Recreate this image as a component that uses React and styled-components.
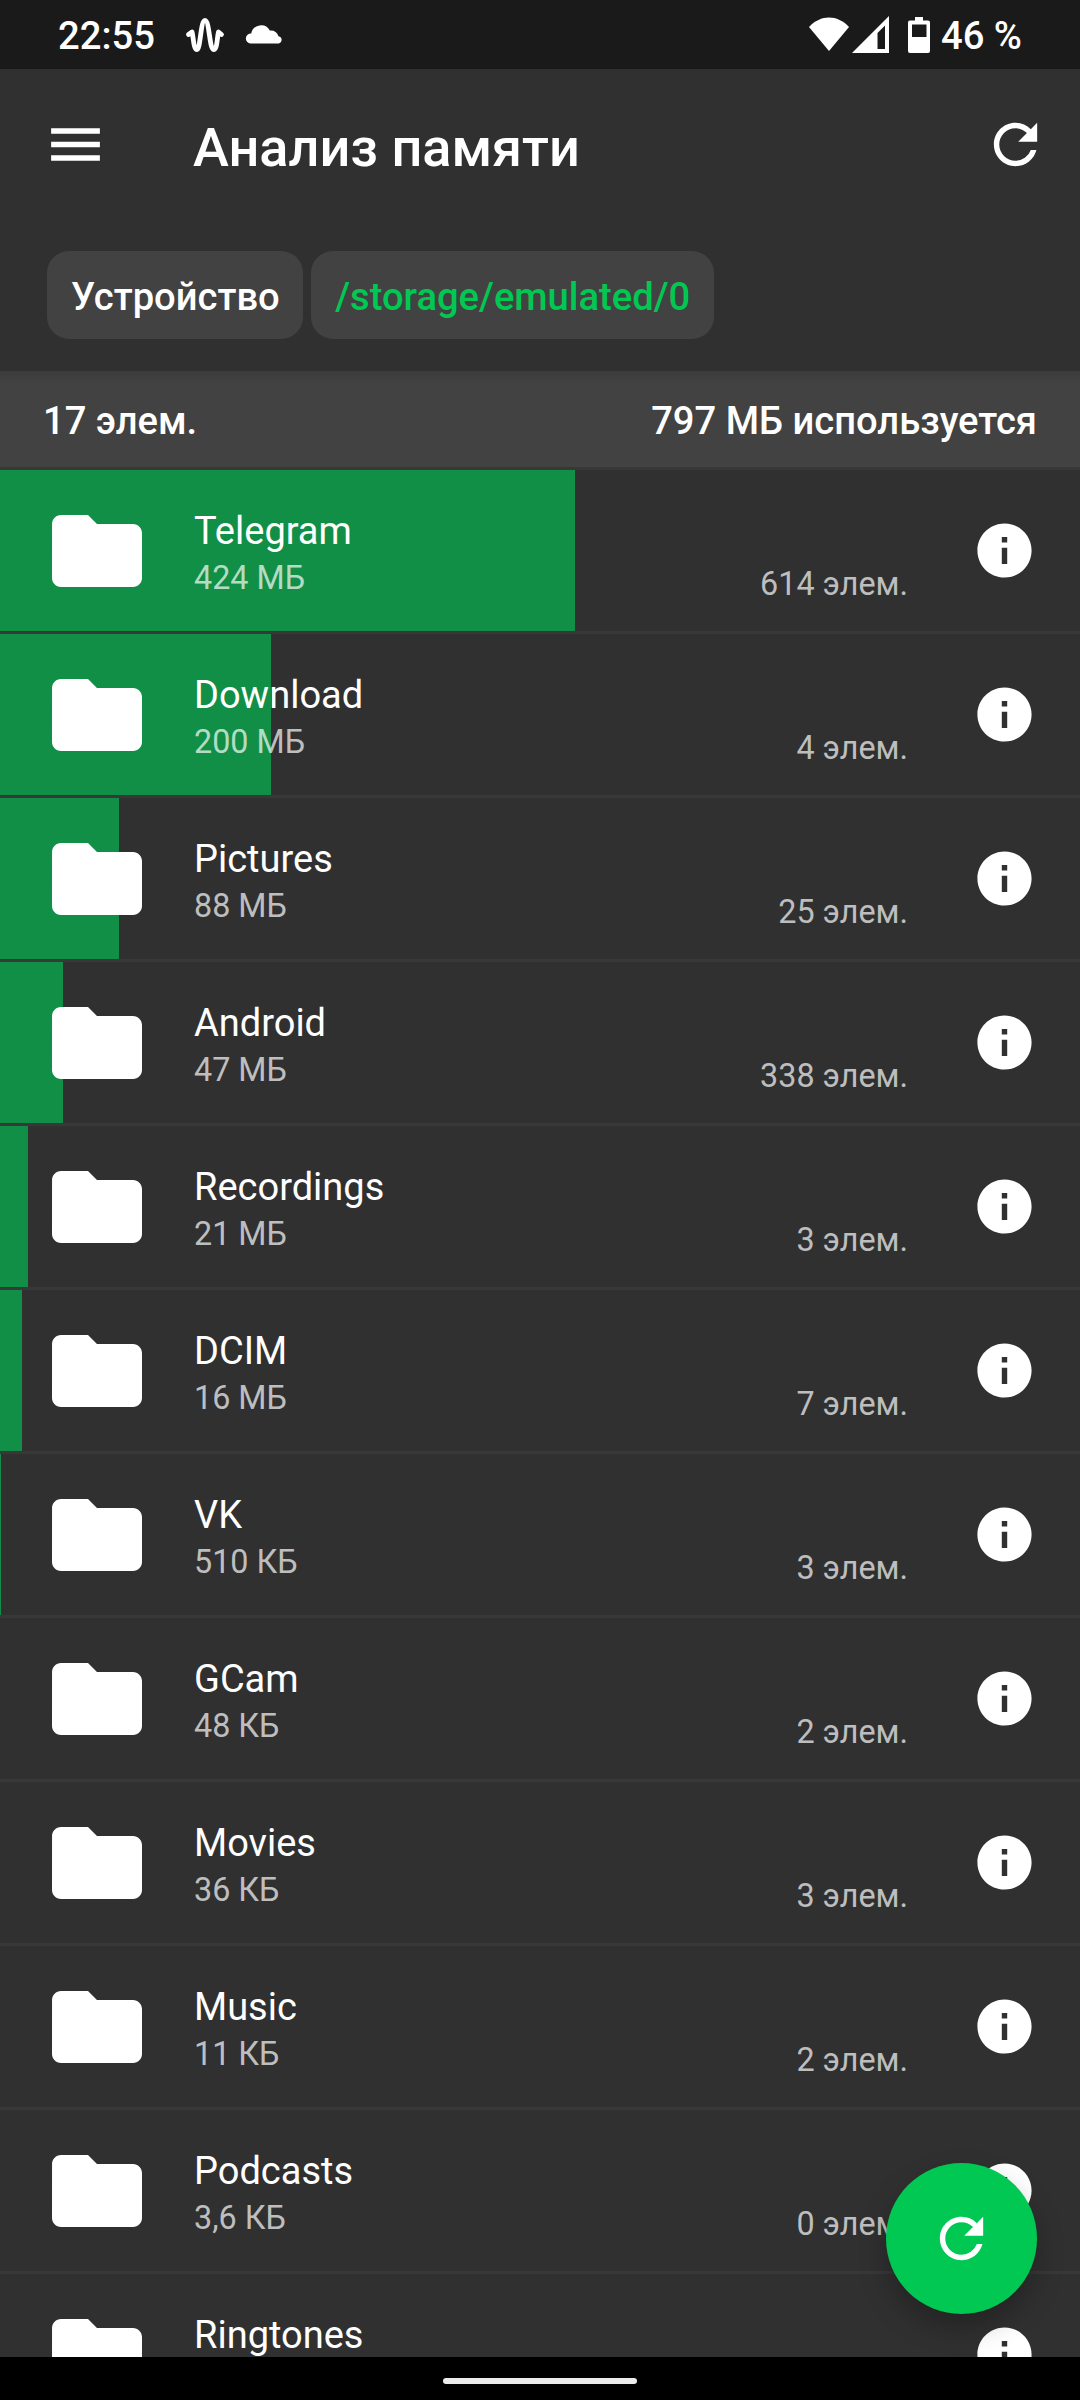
import React, { memo } from 'react';
import styled, { createGlobalStyle } from 'styled-components';

const GlobalStyle = createGlobalStyle`
    * {
        box-sizing: border-box;
    }

    body {
        margin: 0;
        background-color: #303030;
        font-family: Roboto, 'Noto Sans', sans-serif;
        color: white;
    }
`;

const Screen = styled.div`
    position: relative;
    display: flex;
    flex-direction: column;
    width: 1080px;
    height: 2400px;
    overflow: hidden;
    background-color: #303030;
`;

// Status bar //
const StatusBar = styled.div`
    display: flex;
    flex: none;
    justify-content: space-between;
    height: 69px;
    padding: 0 58px;
    background-color: #1a1a1a;
`;

const StatusGroup = styled.div`
    display: flex;
    align-items: center;
    height: 69px;
`;

const StatusText = styled.span`
    padding-top: 2px;
    font-size: 38.2px;
    font-weight: 500;
    line-height: 70px;
    white-space: pre;
`;

const StatusIcon = styled.svg`
    display: block;
    flex: none;
    margin-left: ${({ $gap }) => $gap || 0}px;
`;

const BatteryIcon = styled(StatusIcon)`
    margin-right: 1px;
`;

// Header //
const Header = styled.header`
    flex: none;
    height: 302px;
`;

const Toolbar = styled.div`
    display: flex;
    align-items: center;
    height: 151px;
    padding: 0 32px 0 43px;
`;

const Title = styled.h1`
    flex: 1;
    margin: 6px 0 0 85px;
    font-size: 54.1px;
    font-weight: 500;
    line-height: 64px;
`;

const Icon = styled.svg`
    display: block;
    flex: none;
    width: ${({ $size }) => $size || 65}px;
    height: ${({ $size }) => $size || 65}px;
    fill: white;
`;

const Breadcrumbs = styled.nav`
    display: flex;
    gap: 8px;
    padding: 31px 47px 0;
`;

const Crumb = styled.span`
    height: 88px;
    padding: 0 23.5px 0 24px;
    border-radius: 22px;
    background-color: #424242;
    color: ${({ $active }) => ($active ? '#00c853' : 'white')};
    font-size: 38.15px;
    font-weight: 500;
    line-height: 92px;
`;

const Summary = styled.div`
    display: flex;
    flex: none;
    justify-content: space-between;
    height: 96px;
    padding: 0 43px;
    background: linear-gradient(#3c3c3c, #424242 12px);
    font-size: 38.15px;
    font-weight: 500;
    line-height: 100px;
`;

// List //
const List = styled.div`
    flex: 1;
    min-height: 0;
    overflow: hidden;
`;

const Row = styled.div`
    position: relative;
    display: flex;
    height: 164px;
    padding: 0 43px;
    border-top: 3px solid #383838;
    align-items: center;
`;

const UsageBar = styled.div`
    position: absolute;
    top: 0;
    bottom: 0;
    left: 0;
    background-color: #118f46;
`;

const RowContent = styled.div`
    position: relative;
    display: flex;
    flex: 1;
    align-items: center;
`;

const Texts = styled.div`
    flex: 1;
    margin-left: 43px;
    padding-top: 5px;
`;

const Name = styled.div`
    font-size: 38px;
    line-height: 45px;
`;

const Size = styled.div`
    min-height: 39px;
    margin-top: 5px;
    color: rgba(255, 255, 255, 0.7);
    font-size: 32.3px;
    line-height: 39px;
`;

const Count = styled.div`
    margin: 67px 64px 0 0;
    color: rgba(255, 255, 255, 0.7);
    font-size: 32.3px;
    line-height: 39px;
`;

const Fab = styled.button`
    position: absolute;
    top: 2163px;
    right: 43px;
    display: flex;
    justify-content: center;
    align-items: center;
    width: 151px;
    height: 151px;
    padding: 0;
    border: none;
    border-radius: 50%;
    background-color: #00c853;
    box-shadow: 0 14px 28px rgba(0, 0, 0, 0.26);
`;

const NavigationBar = styled.div`
    z-index: 1;
    flex: none;
    height: 43px;
    padding-top: 21px;
    background-color: black;
`;

const Pill = styled.div`
    width: 194px;
    height: 6px;
    margin: 0 auto;
    border-radius: 3px;
    background-color: #ececec;
`;

const TOTAL = 797;

// used is in megabytes
const folders = [
    { name: 'Telegram', size: '424 МБ', used: 424.3, count: 614 },
    { name: 'Download', size: '200 МБ', used: 200, count: 4 },
    { name: 'Pictures', size: '88 МБ', used: 87.8, count: 25 },
    { name: 'Android', size: '47 МБ', used: 46.5, count: 338 },
    { name: 'Recordings', size: '21 МБ', used: 20.7, count: 3 },
    { name: 'DCIM', size: '16 МБ', used: 16.2, count: 7 },
    { name: 'VK', size: '510 КБ', used: 0.51, count: 3 },
    { name: 'GCam', size: '48 КБ', used: 0.05, count: 2 },
    { name: 'Movies', size: '36 КБ', used: 0.04, count: 3 },
    { name: 'Music', size: '11 КБ', used: 0.01, count: 2 },
    { name: 'Podcasts', size: '3,6 КБ', used: 0, count: 0 },
    { name: 'Ringtones', used: 0 },
];

const RefreshIcon = () => (
    <Icon viewBox="0 0 24 24">
        <path d="M17.65 6.35A7.958 7.958 0 0 0 12 4c-4.42 0-7.99 3.58-7.99 8s3.57 8 7.99 8c3.73 0 6.84-2.55 7.73-6h-2.08A5.99 5.99 0 0 1 12 18c-3.31 0-6-2.69-6-6s2.69-6 6-6c1.66 0 3.14.69 4.22 1.78L13 11h7V4l-2.35 2.35z" />
    </Icon>
);

const FolderRow = memo(({ name, size, used, count }) => (
    <Row>
        <UsageBar style={{ width: `${(used / TOTAL) * 100}%` }} />
        <RowContent>
            <Icon $size={108} viewBox="0 0 24 24">
                <path d="M10 4H4c-1.1 0-1.99.9-1.99 2L2 18c0 1.1.9 2 2 2h16c1.1 0 2-.9 2-2V8c0-1.1-.9-2-2-2h-8l-2-2z" />
            </Icon>
            <Texts>
                <Name>{name}</Name>
                <Size>{size}</Size>
            </Texts>
            {count !== undefined ? <Count>{count} элем.</Count> : null}
            <Icon viewBox="0 0 24 24">
                <path d="M12 2C6.48 2 2 6.48 2 12s4.48 10 10 10 10-4.48 10-10S17.52 2 12 2zm1 15h-2v-6h2v6zm0-8h-2V7h2v2z" />
            </Icon>
        </RowContent>
    </Row>
));

const App = () => (
    <Screen>
        <GlobalStyle />
        <StatusBar>
            <StatusGroup>
                <StatusText>22:55</StatusText>
                <StatusIcon $gap={30} width="40" height="40" viewBox="0 0 40 40">
                    <path
                        d="M3.5 19.5L7 17C8.5 22 8.5 34.5 12 34.5S15.5 5.5 20 5.5S24.5 34.5 28.5 34.5S32 22 33.5 17L36.5 19.5"
                        fill="none"
                        stroke="white"
                        strokeWidth="4.8"
                        strokeLinecap="round"
                        strokeLinejoin="round"
                    />
                </StatusIcon>
                <StatusIcon $gap={20} width="38" height="38" viewBox="0 0 38 38">
                    <path
                        d="M5.5 27.5A5 5 0 0 1 6.2 17.5A10 10 0 0 1 24.8 14.5A8.5 8.5 0 0 1 33.5 20.3A3.7 3.7 0 0 1 34 27.5Z"
                        fill="white"
                    />
                </StatusIcon>
            </StatusGroup>
            <StatusGroup>
                <StatusIcon width="40" height="38" viewBox="0 0 40 38">
                    <path d="M0 11C11.5 -1.7 28.5 -1.7 40 11L20 35Z" fill="white" />
                </StatusIcon>
                <StatusIcon $gap={3} width="37" height="38" viewBox="0 0 37 38">
                    <path
                        d="M37 0V37H0ZM33 9.5L25.5 17V33H33Z"
                        fill="white"
                        fillRule="evenodd"
                    />
                </StatusIcon>
                <BatteryIcon $gap={19} width="22" height="36" viewBox="0 0 22 36">
                    <path
                        d="M7 0H15V3.5H20Q22 3.5 22 5.5V34Q22 36 20 36H2Q0 36 0 34V5.5Q0 3.5 2 3.5H7ZM4 7.5V20H18.5V7.5Z"
                        fill="white"
                        fillRule="evenodd"
                    />
                </BatteryIcon>
                <StatusText> 46 %</StatusText>
            </StatusGroup>
        </StatusBar>
        <Header>
            <Toolbar>
                <Icon viewBox="0 0 24 24">
                    <path d="M3 18h18v-2H3v2zm0-5h18v-2H3v2zm0-7v2h18V6H3z" />
                </Icon>
                <Title>Анализ памяти</Title>
                <RefreshIcon />
            </Toolbar>
            <Breadcrumbs>
                <Crumb>Устройство</Crumb>
                <Crumb $active>/storage/emulated/0</Crumb>
            </Breadcrumbs>
        </Header>
        <Summary>
            <span>17 элем.</span>
            <span>797 МБ используется</span>
        </Summary>
        <List>
            {folders.map(folder => (
                <FolderRow key={folder.name} {...folder} />
            ))}
        </List>
        <Fab>
            <RefreshIcon />
        </Fab>
        <NavigationBar>
            <Pill />
        </NavigationBar>
    </Screen>
);

export default App;
